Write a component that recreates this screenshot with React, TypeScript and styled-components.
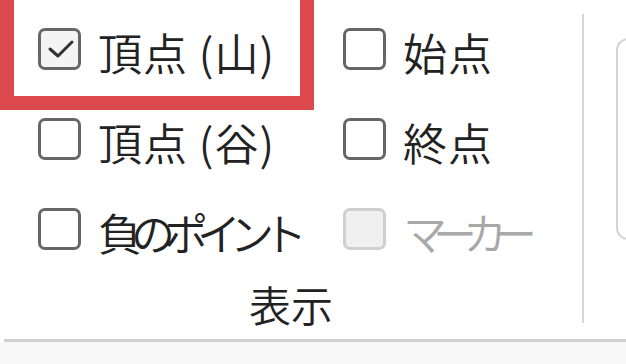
import React from "react";
import styled, { createGlobalStyle } from "styled-components";

const Global = createGlobalStyle`
  html, body { margin: 0; padding: 0; background: #ffffff; }
  body { width: 626px; height: 364px; overflow: hidden; }
  #root { width: 626px; height: 364px; }
`;

const Page = styled.div`
  position: relative;
  width: 626px;
  height: 364px;
  display: flex;
  flex-direction: column;
  background: #ffffff;
  font-family: "Noto Sans CJK JP", "Noto Sans", sans-serif;
  font-weight: 350;
  overflow: hidden;
`;

const Ribbon = styled.div`
  display: flex;
  height: 339px;
  flex: none;
`;

const Group = styled.div`
  width: 582px;
  flex: none;
  display: flex;
  flex-direction: column;
`;

const Options = styled.div`
  display: grid;
  grid-template-columns: 305px auto;
  grid-auto-rows: 90px;
  padding: 4px 0 0 38px;
`;

const Option = styled.div`
  display: flex;
  align-items: center;
  gap: 17px;
`;

const Box = styled.span<{ $checked?: boolean; $disabled?: boolean }>`
  box-sizing: border-box;
  width: 43px;
  height: 42px;
  flex: none;
  border: 3px solid ${(p) => (p.$disabled ? "#cfcfcf" : "#666666")};
  border-radius: 7px;
  background: ${(p) => (p.$disabled ? "#f0f0f0" : p.$checked ? "#f4f4f4" : "#ffffff")};
  display: flex;
  align-items: center;
  justify-content: center;
`;

const Label = styled.span<{ $disabled?: boolean; $spacing?: number }>`
  font-size: 44px;
  line-height: 1;
  padding-top: 6px;
  color: ${(p) => (p.$disabled ? "#a8a8a8" : "#222222")};
  white-space: nowrap;
  letter-spacing: ${(p) => p.$spacing ?? 1}px;
`;

const GroupTitle = styled.div`
  height: 60px;
  display: flex;
  align-items: center;
  justify-content: center;
  font-size: 42px;
  line-height: 1;
  color: #222222;
`;

const Separator = styled.div`
  width: 2px;
  margin-top: 14px;
  height: 309px;
  background: #d6d6d6;
  flex: none;
`;

const NextGroup = styled.div`
  flex: none;
  width: 60px;
  height: 202px;
  margin: 38px 0 0 32px;
  box-sizing: border-box;
  border: 2px solid #d4d4d4;
  border-radius: 12px;
`;

const BottomLine = styled.div`
  height: 3px;
  margin-left: 4px;
  background: #d0d0d0;
  flex: none;
`;

const Below = styled.div`
  flex: 1;
  background: #f8f8f8;
`;

const Highlight = styled.div`
  position: absolute;
  left: 0;
  top: -14px;
  width: 314px;
  height: 124px;
  box-sizing: border-box;
  border: 14px solid #dc4a50;
  pointer-events: none;
`;

const Check = () => (
  <svg width="30" height="24" viewBox="0 0 30 24">
    <path d="M5 12 L13 19 L27 5" fill="none" stroke="#333" strokeWidth="3" strokeLinecap="round" strokeLinejoin="round" />
  </svg>
);

type Item = { label: string; checked?: boolean; disabled?: boolean; spacing?: number };

const items: Item[] = [
  { label: "頂点 (山)", checked: true },
  { label: "始点" },
  { label: "頂点 (谷)" },
  { label: "終点" },
  { label: "負のポイント", spacing: -11 },
  { label: "マーカー", disabled: true, spacing: -14 },
];

export default function App() {
  return (
    <Page>
      <Global />
      <Ribbon>
        <Group>
          <Options>
            {items.map((it) => (
              <Option key={it.label}>
                <Box $checked={it.checked} $disabled={it.disabled}>
                  {it.checked && <Check />}
                </Box>
                <Label $disabled={it.disabled} $spacing={it.spacing}>
                  {it.label}
                </Label>
              </Option>
            ))}
          </Options>
          <GroupTitle>表示</GroupTitle>
        </Group>
        <Separator />
        <NextGroup />
      </Ribbon>
      <BottomLine />
      <Below />
      <Highlight />
    </Page>
  );
}
